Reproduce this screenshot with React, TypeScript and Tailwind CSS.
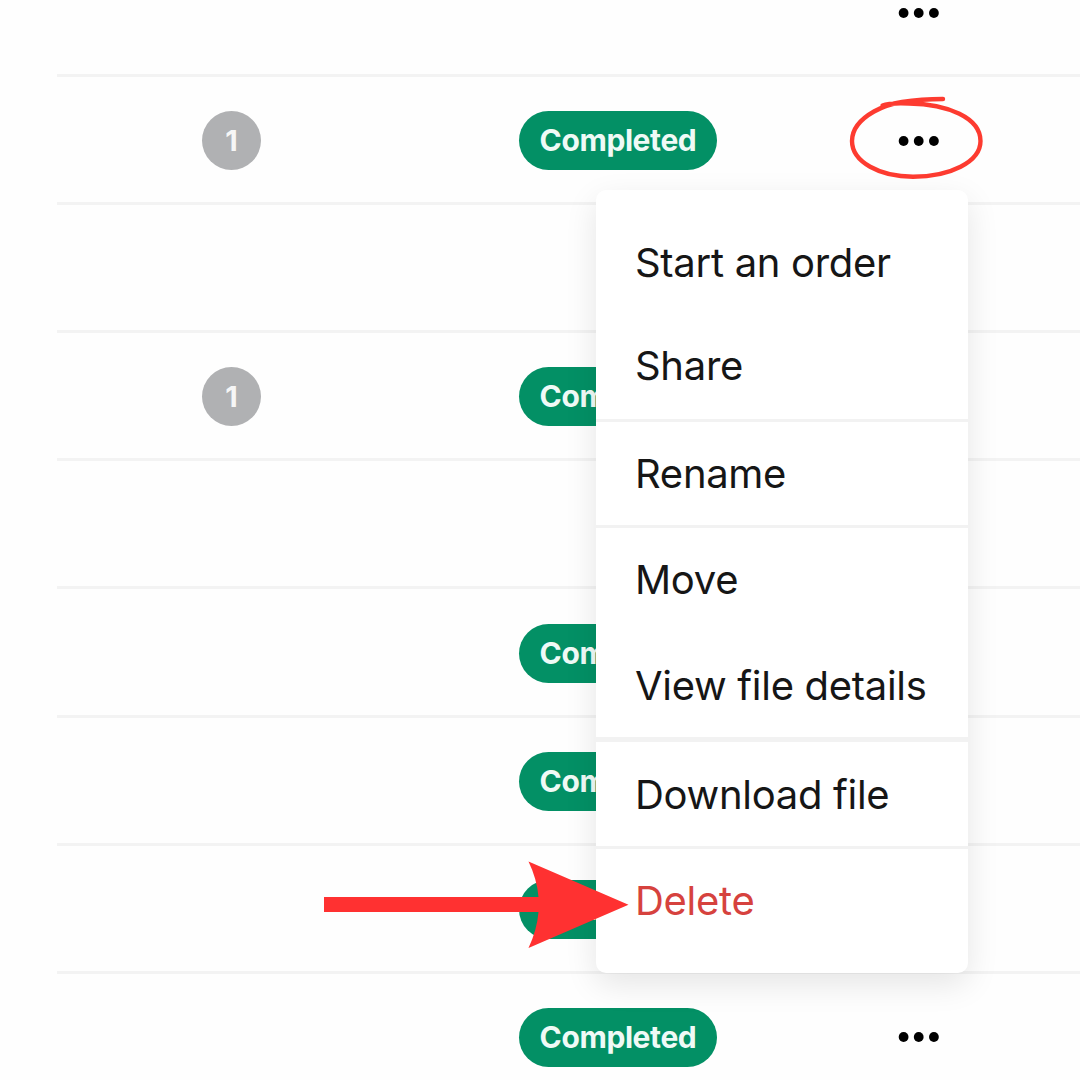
type Row = {
  count?: number;
  completed?: boolean;
};

type MenuEntry = {
  label: string;
  className: string;
  danger?: boolean;
};

const rows: Row[] = [
  {},
  { count: 1, completed: true },
  {},
  { count: 1, completed: true },
  {},
  { completed: true },
  { completed: true },
  { completed: true },
  { completed: true },
];

const menu: MenuEntry[] = [
  { label: "Start an order", className: "h-[105px]" },
  { label: "Share", className: "h-[107px] border-b-[3px] pb-[2px]" },
  { label: "Rename", className: "h-[106px] border-b-[3px]" },
  { label: "Move", className: "h-[104px]" },
  { label: "View file details", className: "h-[110px] border-b-[5px] pt-[2px]" },
  { label: "Download file", className: "h-[107px] border-b-[3px] pt-[2px]" },
  { label: "Delete", className: "h-[103px]", danger: true },
];

function Dots() {
  return (
    <svg width="42" height="12" viewBox="0 0 42 12" className="fill-black">
      <circle cx="5.6" cy="6" r="4.9" />
      <circle cx="20.7" cy="6" r="4.9" />
      <circle cx="35.9" cy="6" r="4.9" />
    </svg>
  );
}

function TableRow({ count, completed }: Row) {
  return (
    <div className="grid h-[128.1px] grid-cols-[462px_379px_1fr] items-center border-b-[3px] border-[#f3f3f3] pt-[2px]">
      <div className="pl-[145px]">
        {count && (
          <span className="flex h-[59px] w-[59px] items-center justify-center rounded-full bg-[#b0b1b3] text-[29px] font-bold text-[#f6f6f6]">
            {count}
          </span>
        )}
      </div>
      <div>
        {completed && (
          <span className="flex h-[59px] w-[198px] items-center justify-center rounded-full bg-[#039065] text-[30px] font-bold tracking-[-0.4px] text-[#effaf6]">
            Completed
          </span>
        )}
      </div>
      <button aria-label="More actions">
        <Dots />
      </button>
    </div>
  );
}

function ContextMenu() {
  return (
    <div className="absolute left-[596px] top-[190px] h-[783px] w-[372px] rounded-[10px] bg-white pt-5 shadow-[0_11px_32px_rgba(0,0,0,0.1)]">
      {menu.map(({ label, className, danger }) => (
        <div
          key={label}
          className={`flex items-center border-[#f2f2f2] pl-[39px] text-[40px] leading-none tracking-[-0.3px] whitespace-nowrap ${className} ${
            danger ? "text-[#d6423e]" : "text-[#161616]"
          }`}
        >
          {label}
        </div>
      ))}
    </div>
  );
}

export default function App() {
  return (
    <div className="relative h-[1080px] w-[1080px] overflow-hidden bg-[#fefefe] font-['Inter',sans-serif]">
      <div className="-mt-[51px] ml-[57px]">
        {rows.map((row, i) => (
          <TableRow key={i} {...row} />
        ))}
      </div>

      <ContextMenu />

      {/* hand drawn ring */}
      <svg
        className="absolute left-[840px] top-[90px]"
        width="150"
        height="96"
        viewBox="840 90 150 96"
        fill="none"
        stroke="#fd3b30"
        strokeWidth="4.4"
        strokeLinecap="round"
        strokeLinejoin="round"
      >
        <path d="M943 99C926 99 915 100 902 102C890 104 882 107 874 111.500C859 120 852 130 852 141C852 162 880 176.700 913 176.700C950 176.700 980.500 162 980.500 141C980.500 118 948 104 909 103.500C896 103 886 104 882.500 105.500" />
      </svg>

      {/* arrow */}
      <svg
        className="absolute left-[320px] top-[855px]"
        width="315"
        height="100"
        viewBox="320 855 315 100"
        fill="#ff3131"
      >
        <path d="M324 897H538.500Q537 879 528.500 861.500L628.500 904.700L528.500 948Q537 930 538.500 912H324Z" />
      </svg>
    </div>
  );
}
